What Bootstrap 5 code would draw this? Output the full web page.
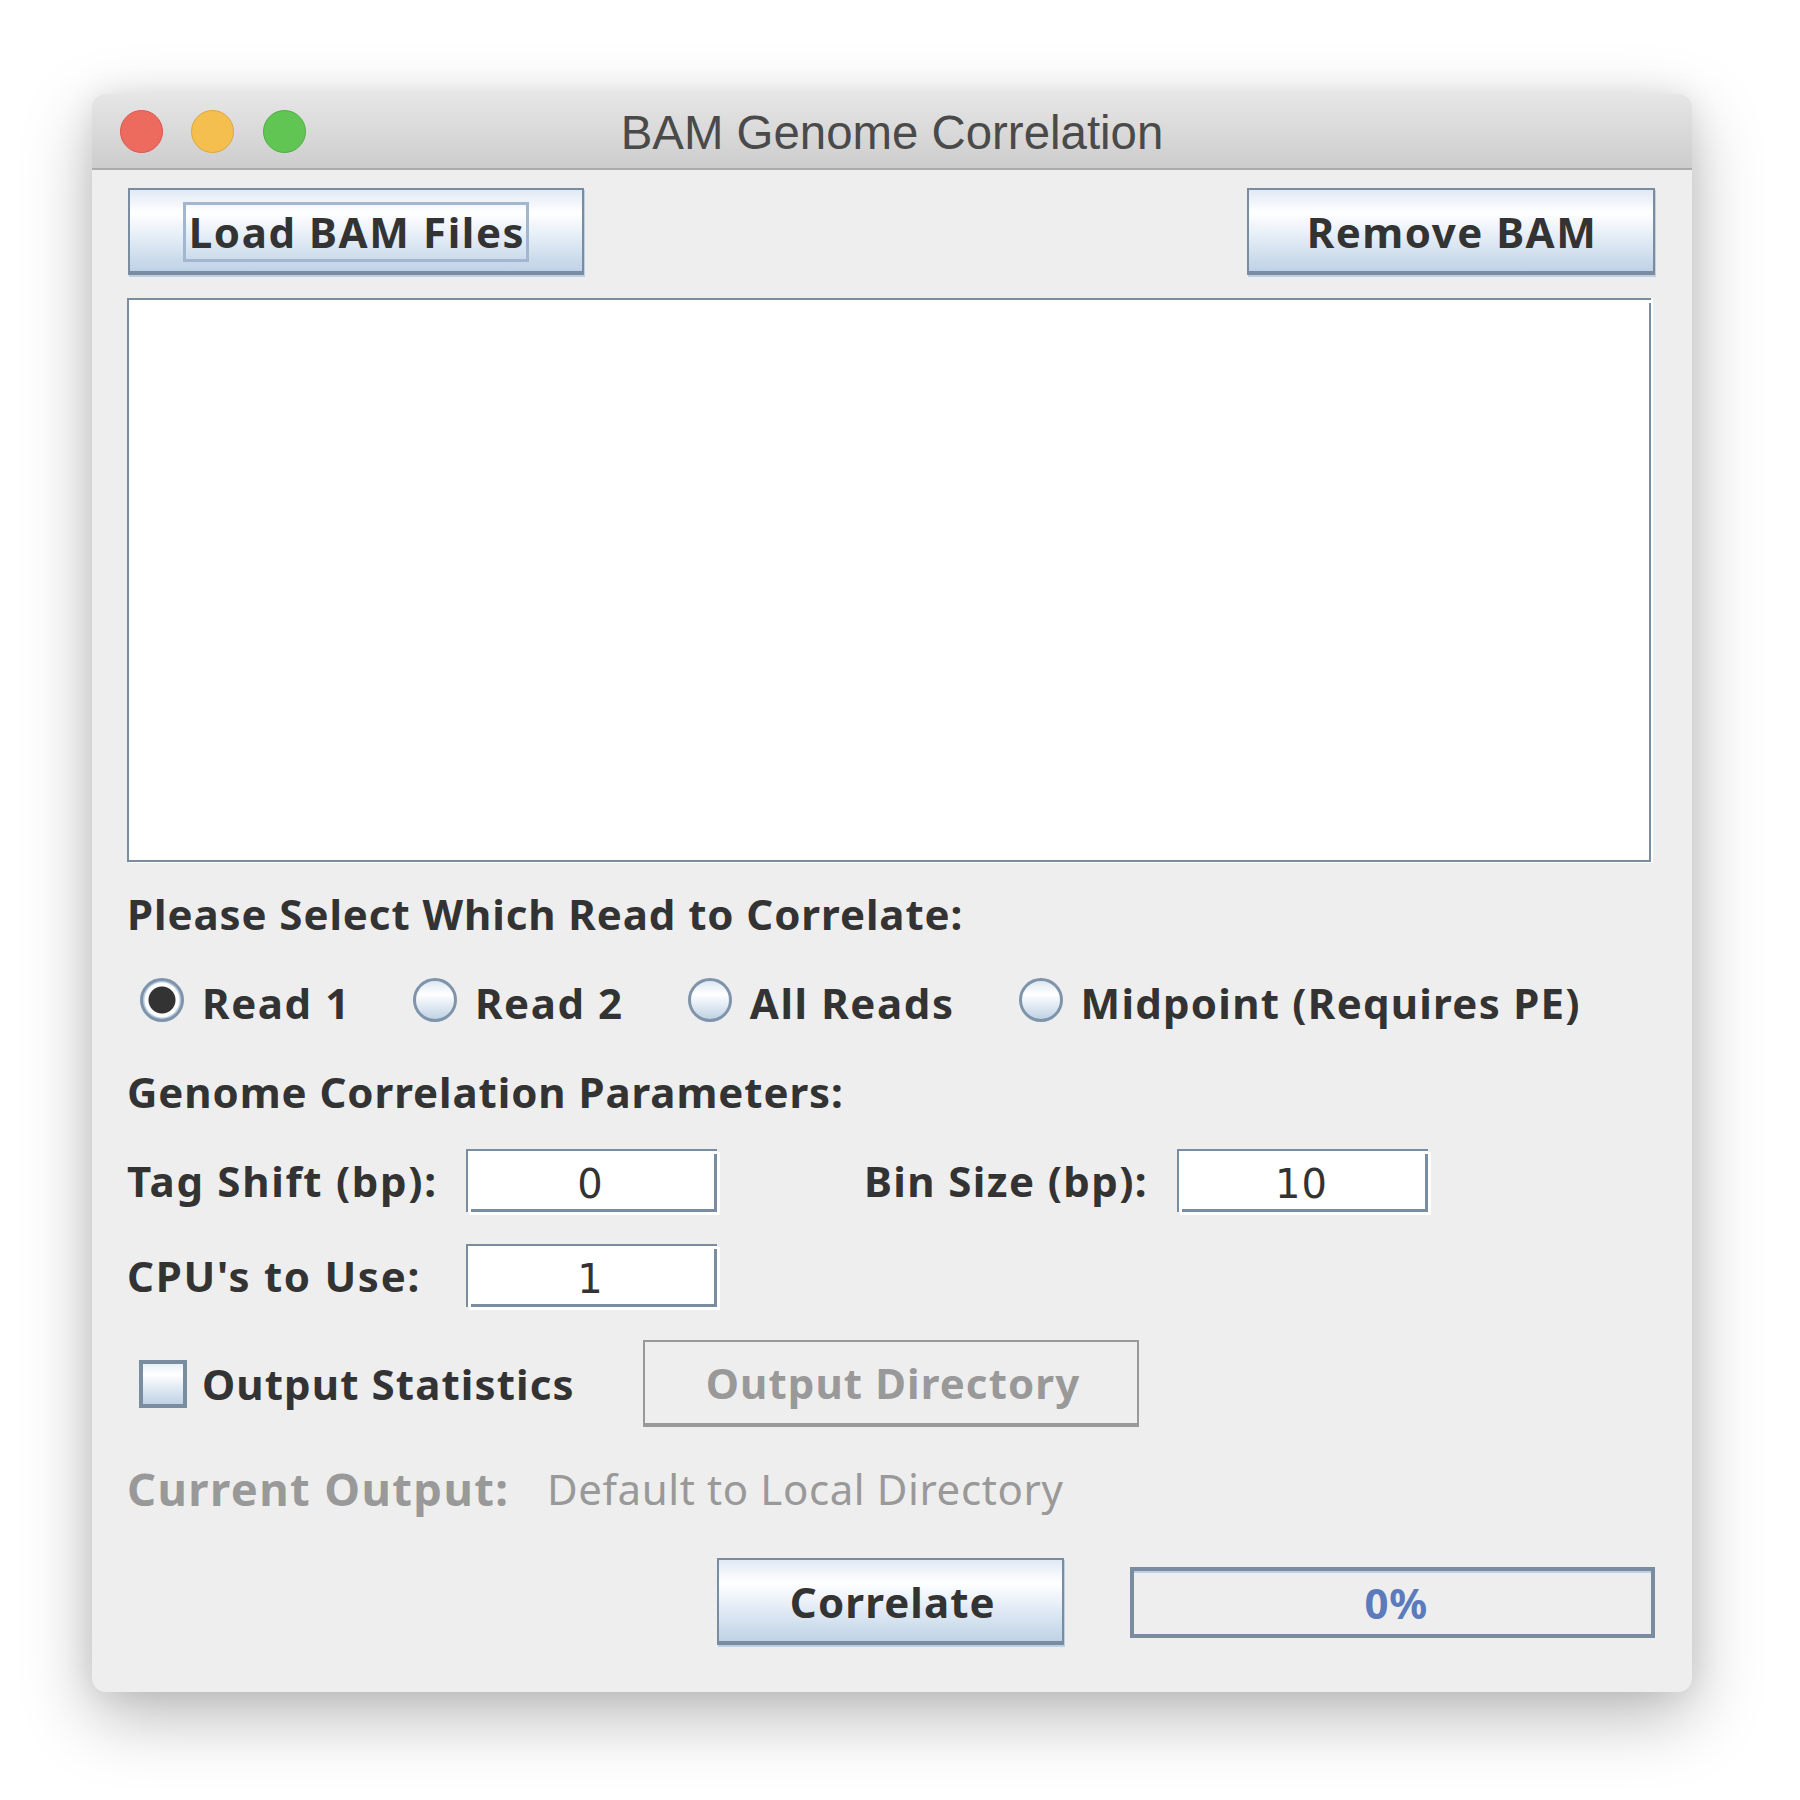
<!DOCTYPE html>
<html lang="en">
<head>
<meta charset="UTF-8">
<title>BAM Genome Correlation</title>
<link href="https://cdn.jsdelivr.net/npm/bootstrap@5.3.3/dist/css/bootstrap.min.css" rel="stylesheet">
<style>
body{background:#fff;margin:0;width:1800px;height:1800px;overflow:hidden}
.app-window{width:1600px;height:1598px;margin:94px 0 0 92px;background:#eee;border-radius:14px;box-shadow:0 24px 70px rgba(0,0,0,.28),0 0 30px rgba(0,0,0,.08);overflow:hidden;font-family:"Noto Sans","DejaVu Sans",sans-serif;font-weight:700;font-size:42px;line-height:1;color:#333;letter-spacing:.92px}
.title-bar{height:76px;background:linear-gradient(#e6e6e6,#cdcdcd);border-bottom:2px solid #ababab;position:relative;padding-top:3px}
.title-text{font-family:"Liberation Sans",sans-serif;font-weight:400;font-size:47.4px;color:#4a4a4a;letter-spacing:0}
.light{width:43px;height:43px;border-radius:50%;position:absolute;top:16px}
.light-red{left:28px;background:#ec6a5e;border:1px solid #d8574c}
.light-yellow{left:99px;background:#f5bf4f;border:1px solid #dfa53a}
.light-green{left:171px;background:#61c554;border:1px solid #4eae42}
.win-body{padding:18px 37px 0 35px}
.swing-btn{background:linear-gradient(#e1e9f4,#fff 28%,#e4edf6 58%,#bfd2e5);border:2px solid #7a8ca0;border-bottom-width:4px;border-radius:0;box-shadow:1px 2px 0 #bdd0e6;color:#333;font:inherit;letter-spacing:inherit;height:87px;padding:2px 0 0;display:flex;align-items:center;justify-content:center}
.swing-btn:hover{background:linear-gradient(#e1e9f4,#fff 28%,#e4edf6 58%,#bfd2e5);border-color:#7a8ca0;color:#333}
.btn-load{width:456px;margin-left:1px;letter-spacing:1.6px}
.btn-remove{width:408px;letter-spacing:1.5px;padding-left:2px}
.btn-correlate{width:349px;letter-spacing:1.1px;padding-left:5px}
.focus-box{border:3px solid #a2b7cf;padding:0 1px 0 3px;line-height:1;height:60px;display:flex;align-items:center}
.file-list{height:564px;margin-top:23px;width:1524px;background:linear-gradient(#7a8ca0,#7a8ca0) right 0 top 3px/2px calc(100% - 3px) no-repeat #fff;border:solid #7a8ca0;border-width:2px 0 2px 2px;box-shadow:2px 1px 0 #fff}
.sec-head{height:48px;display:flex;align-items:center}
.sec-first{margin-top:28px}
.sec-second{margin-top:41px}
.radio-row{padding-left:13px;height:48px;margin-top:41px;letter-spacing:1.6px}
.radio-dot{width:44px;height:44px;border-radius:50%;border:3px solid #7f94aa;background:linear-gradient(#dde7f2,#fff 35%,#bfd2e5);margin:0 18px 6px 0;flex:none}
.radio-on{background:radial-gradient(circle,#333 0 13px,#fff 14px 17px,#b9cde2 18px)}
.radio-gap{margin-left:64px}
.radio-gap-first{margin-left:62px}
.mid-label{letter-spacing:1.25px}
.field{width:251px;height:63px;background:linear-gradient(#7a8ca0,#7a8ca0) right 0 top 3px/3px calc(100% - 3px) no-repeat,linear-gradient(#7a8ca0,#7a8ca0) right 0 bottom 0/calc(100% - 3px) 3px no-repeat,#fff;border:solid #7a8ca0;border-width:2px 0 0 2px;border-radius:0;box-shadow:3px 3px 0 #fff;text-align:center;font-family:"DejaVu Sans",sans-serif;font-weight:400;font-size:40px;color:#333;padding:4px 4px 0 0;letter-spacing:1px}
.label-a{width:339px;flex:none;letter-spacing:1.7px;padding-top:1px}
.label-b{margin-left:147px;width:313px;flex:none;letter-spacing:1.4px;padding-top:1px}
.row-tag{margin-top:33px}
.row-cpu{margin-top:32px}
.row-out{margin-top:33px;padding-left:12px}
.row-cur{margin-top:38px;height:48px}
.row-go{margin-top:45px;padding-left:590px}
.check-box{width:48px;height:48px;border:4px solid #7a8ca0;background:linear-gradient(#e8eff7,#fff 25%,#bfd2e5);margin-right:15px;flex:none}
.stat-label{width:441px;flex:none;letter-spacing:1.12px}
.out-dir{width:496px;height:87px;border:2px solid #999;border-bottom-width:4px;color:#999;letter-spacing:1.1px;padding-left:4px;display:flex;align-items:center;justify-content:center}
.muted-big{color:#999;font-size:45.3px;letter-spacing:1.4px}
.cur-label{width:420px;flex:none}
.muted-thin{color:#999;font-weight:400;font-size:42px;letter-spacing:.6px}
.prog{width:529px;height:71px;margin:2px 0 0 66px;border:4px solid #7a8ca0;box-shadow:inset 0 2px 0 #bdd0e6;color:#5b7bbd;display:flex;align-items:center;justify-content:center;padding-left:8px}
</style>
</head>
<body>
<div class="app-window d-flex flex-column">
  <div class="title-bar d-flex align-items-center justify-content-center">
    <span class="light light-red"></span><span class="light light-yellow"></span><span class="light light-green"></span>
    <span class="title-text">BAM Genome Correlation</span>
  </div>
  <div class="win-body">
    <div class="d-flex justify-content-between">
      <button class="btn swing-btn btn-load"><span class="focus-box">Load BAM Files</span></button>
      <button class="btn swing-btn btn-remove">Remove BAM</button>
    </div>
    <div class="file-list"></div>

    <div class="sec-head sec-first">Please Select Which Read to Correlate:</div>
    <div class="radio-row d-flex align-items-center">
      <span class="radio-dot radio-on"></span><span>Read 1</span>
      <span class="radio-dot radio-gap-first"></span><span>Read 2</span>
      <span class="radio-dot radio-gap"></span><span>All Reads</span>
      <span class="radio-dot radio-gap"></span><span class="mid-label">Midpoint (Requires PE)</span>
    </div>
    <div class="sec-head sec-second">Genome Correlation Parameters:</div>

    <div class="d-flex align-items-center row-tag">
      <span class="label-a">Tag Shift (bp):</span>
      <input class="form-control field" value="0">
      <span class="label-b">Bin Size (bp):</span>
      <input class="form-control field" value="10">
    </div>
    <div class="d-flex align-items-center row-cpu">
      <span class="label-a">CPU's to Use:</span>
      <input class="form-control field" value="1">
    </div>

    <div class="d-flex align-items-center row-out">
      <span class="check-box"></span><span class="stat-label">Output Statistics</span>
      <div class="out-dir">Output Directory</div>
    </div>

    <div class="d-flex align-items-center row-cur">
      <span class="muted-big cur-label">Current Output:</span>
      <span class="muted-thin">Default to Local Directory</span>
    </div>

    <div class="d-flex align-items-center row-go">
      <button class="btn swing-btn btn-correlate">Correlate</button>
      <div class="prog">0%</div>
    </div>
  </div>
</div>
</body>
</html>
